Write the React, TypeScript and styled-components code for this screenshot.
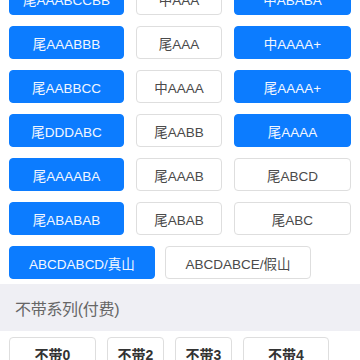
import React from "react";
import styled, { createGlobalStyle } from "styled-components";

const Global = createGlobalStyle`
  html, body { margin: 0; padding: 0; background: #ffffff; }
  body {
    font-family: "Liberation Sans", "Noto Sans CJK SC", Arial, sans-serif;
    overflow: hidden;
  }
`;

const Page = styled.div`
  width: 360px;
  height: 360px;
  overflow: hidden;
  background: #ffffff;
`;

const Scroll = styled.div`
  margin-top: -18px;
  display: flex;
  flex-direction: column;
`;

const Grid = styled.div`
  display: grid;
  grid-template-columns: 115px 86px 117px;
  column-gap: 12px;
  row-gap: 11px;
  padding: 0 9px;
`;

const WideRow = styled.div`
  display: flex;
  gap: 10px;
  padding: 11px 9px 0;
`;

const Chip = styled.div<{ $on?: boolean; $w?: number }>`
  box-sizing: border-box;
  height: 33px;
  ${(p) => (p.$w ? `width: ${p.$w}px;` : "")}
  border-radius: 4px;
  display: flex;
  align-items: center;
  justify-content: center;
  font-size: 13.5px;
  white-space: nowrap;
  background: ${(p) => (p.$on ? "#0c7cff" : "#ffffff")};
  color: ${(p) => (p.$on ? "#f2f7ff" : "#4a4a4a")};
  border: 1px solid ${(p) => (p.$on ? "#0c7cff" : "#dedede")};
`;

const Section = styled.div`
  margin-top: 5px;
  height: 47px;
  background: #efeff4;
  display: flex;
  align-items: center;
  padding: 0 15px;
  box-sizing: border-box;
`;

const SectionTitle = styled.span`
  font-size: 16px;
  color: #666666;
  letter-spacing: -0.3px;
`;

const FreeRow = styled.div`
  display: flex;
  gap: 11px;
  padding: 6px 9px 0;
`;

const FreeChip = styled(Chip)`
  color: #333333;
  font-weight: 700;
  font-size: 14px;
`;

type Item = { t: string; on?: boolean };

const rows: Item[][] = [
  [{ t: "尾AAABCCBB", on: true }, { t: "中AAA" }, { t: "中ABABA", on: true }],
  [{ t: "尾AAABBB", on: true }, { t: "尾AAA" }, { t: "中AAAA+", on: true }],
  [{ t: "尾AABBCC", on: true }, { t: "中AAAA" }, { t: "尾AAAA+", on: true }],
  [{ t: "尾DDDABC", on: true }, { t: "尾AABB" }, { t: "尾AAAA", on: true }],
  [{ t: "尾AAAABA", on: true }, { t: "尾AAAB" }, { t: "尾ABCD" }],
  [{ t: "尾ABABAB", on: true }, { t: "尾ABAB" }, { t: "尾ABC" }],
];

const free = [
  { t: "不带0", w: 87 },
  { t: "不带2", w: 57 },
  { t: "不带3", w: 57 },
  { t: "不带4", w: 86 },
];

export default function App() {
  return (
    <Page>
      <Global />
      <Scroll>
        <Grid>
          {rows.flat().map((it, i) => (
            <Chip key={i} $on={it.on}>
              {it.t}
            </Chip>
          ))}
        </Grid>
        <WideRow>
          <Chip $on $w={146}>
            ABCDABCD/真山
          </Chip>
          <Chip $w={146}>ABCDABCE/假山</Chip>
        </WideRow>
        <Section>
          <SectionTitle>不带系列(付费)</SectionTitle>
        </Section>
        <FreeRow>
          {free.map((f) => (
            <FreeChip key={f.t} $w={f.w}>
              {f.t}
            </FreeChip>
          ))}
        </FreeRow>
      </Scroll>
    </Page>
  );
}
